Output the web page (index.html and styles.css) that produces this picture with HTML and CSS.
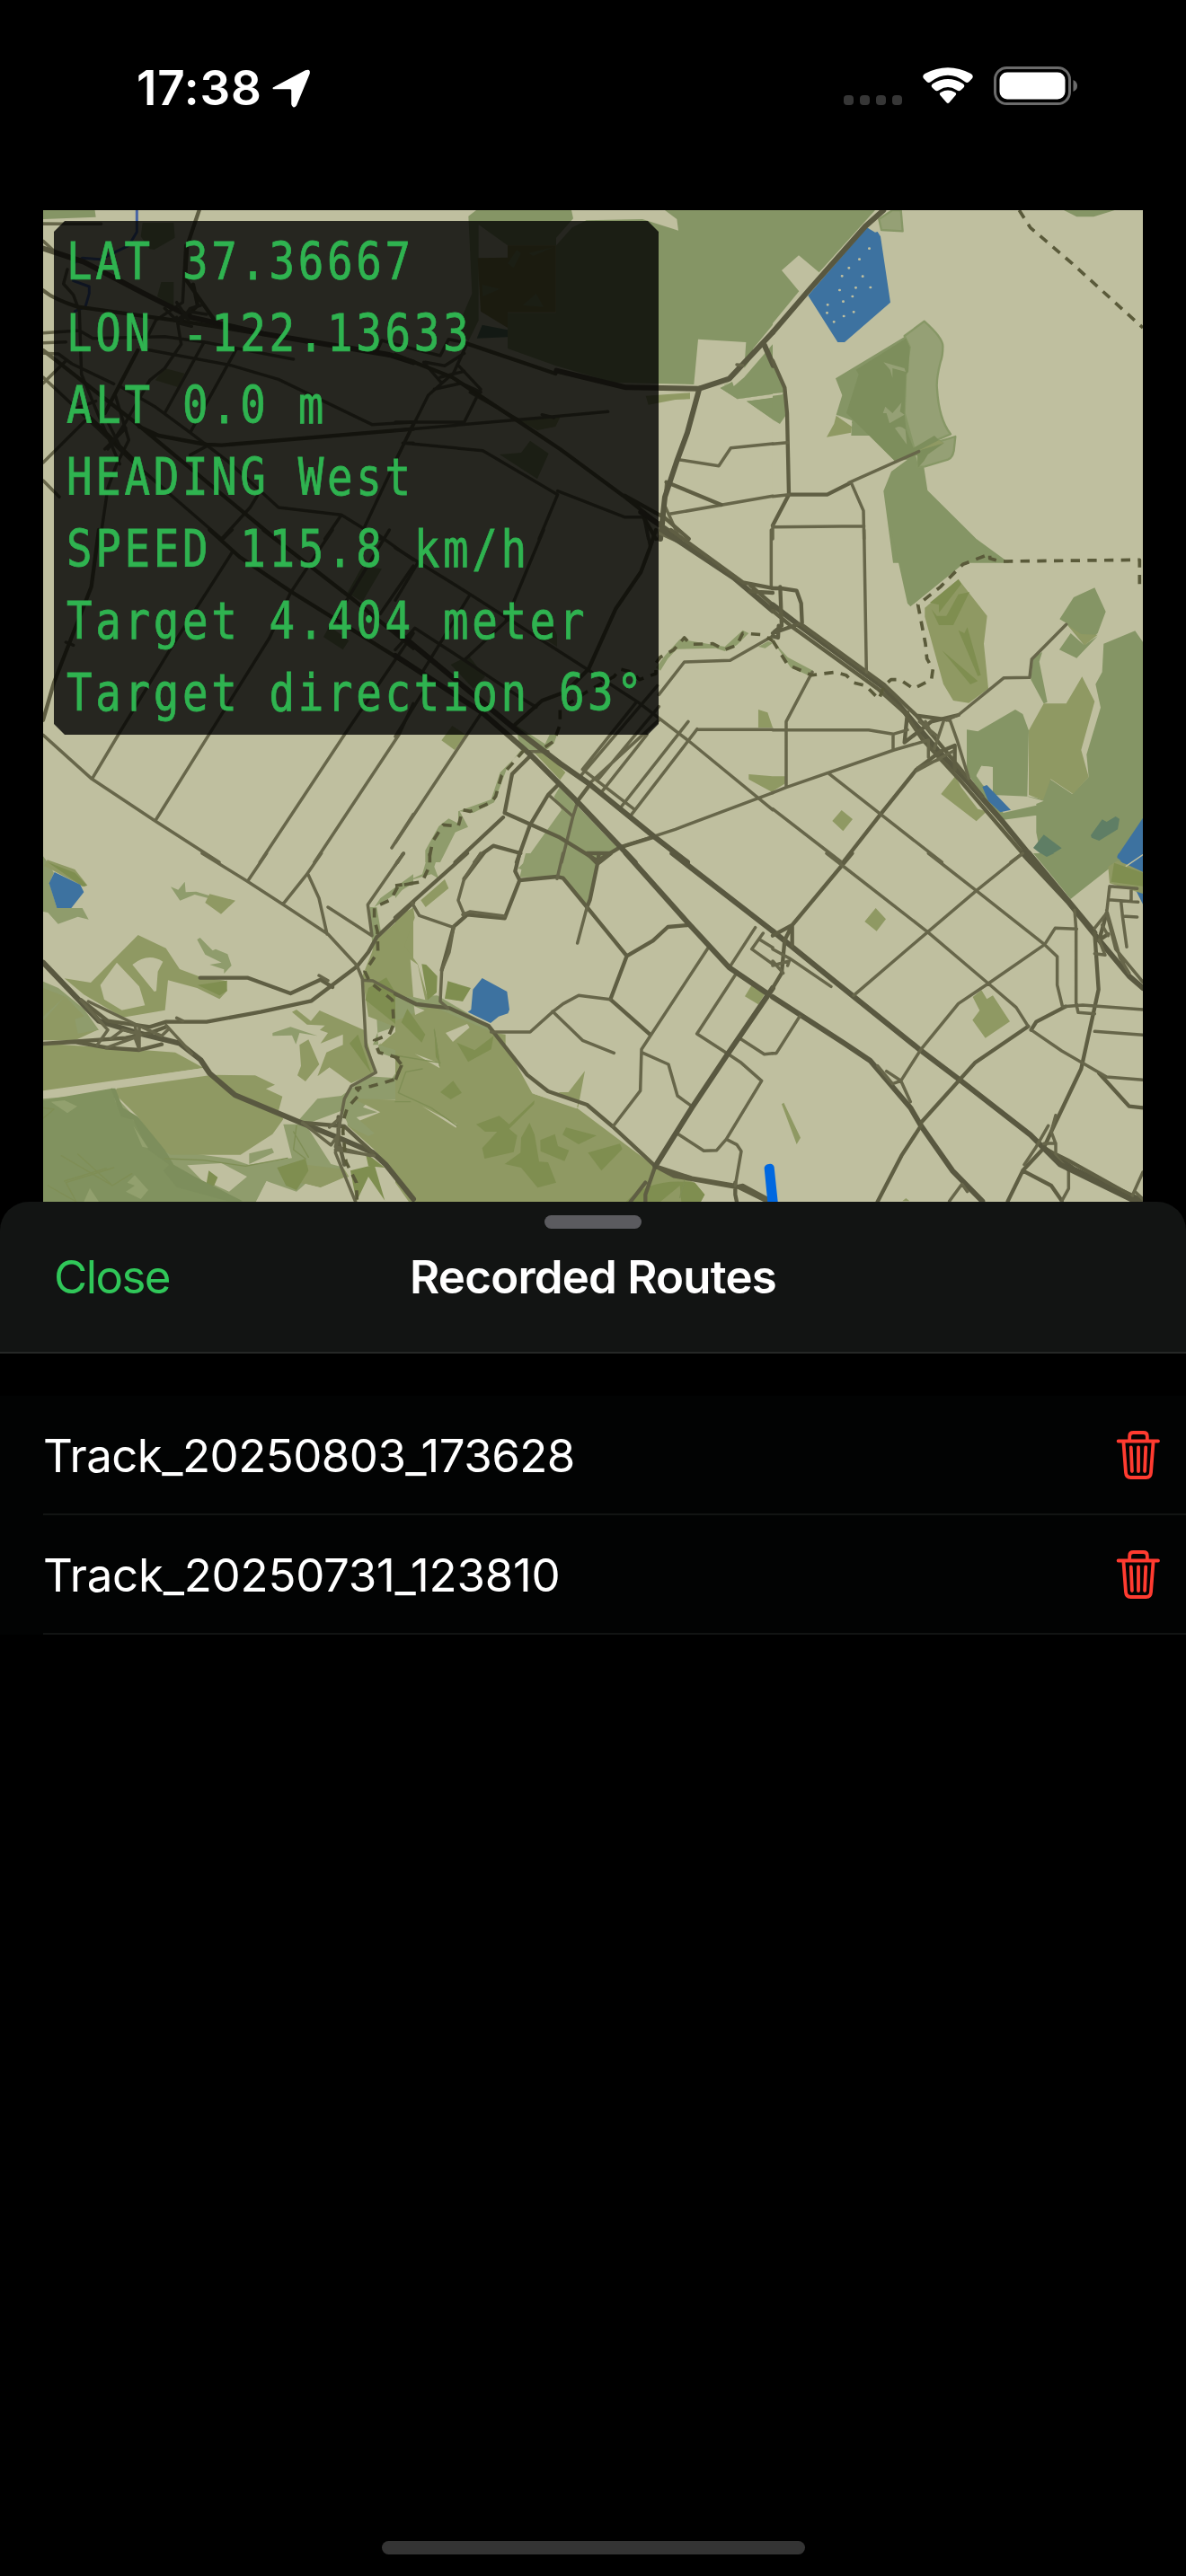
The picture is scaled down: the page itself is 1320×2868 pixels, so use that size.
FILE: index.html
```html
<!DOCTYPE html>
<html lang="en">
<head>
<meta charset="utf-8">
<title>Recorded Routes</title>
<link rel="stylesheet" href="styles.css">
</head>
<body>
<svg class="defs" aria-hidden="true">
  <symbol id="trash" viewBox="0 0 50 58">
    <path d="M2.6 13.5H47M15.2 13V8Q15.2 4 19.5 4H30.5Q34.8 4 34.8 8V13M8.4 14L11 48.5Q11.4 54 16.5 54H33.5Q38.6 54 39 48.5L41.6 14M16.8 20.5L17.9 47M25 20.5V47M33.2 20.5L32.1 47"/>
  </symbol>
</svg>
<div class="phone">
  <header class="status">
    <div class="clock"><span class="time">17:38</span>
      <svg class="arrow" viewBox="0 0 44 44"><path d="M3 20.500L38 2Q43 0 42 5L27 41Q24 45 22.500 40V24Q22.500 22 20 22H4Q-1 22.500 3 20.500Z"/></svg>
    </div>
    <div class="signals">
      <div class="dots"><i></i><i></i><i></i><i></i></div>
      <svg class="wifi" viewBox="0 0 60 43"><path d="M3.500 14Q-1 10 3.500 7Q30-7 56.500 7Q61 10 56.500 14L54 16.500Q52 18 50 16.500Q30 1 10 16.500Q8 18 6 16.500ZM13 24Q9 21 13 18.500Q30 8 47 18.500Q51 21 47 24L45 26Q43 28 40 26Q30 19 20 26Q17 28 15 26ZM22 33Q19 30 22 28.500Q30 24 38 28.500Q41 30 38 33L31.500 40.500Q30 42 28.500 40.500Z"/></svg>
      <svg class="battery" viewBox="0 0 94 44"><rect class="shell" x="1.500" y="1.500" width="83" height="40" rx="13"/><rect class="charge" x="6.500" y="6.500" width="73" height="30" rx="8.500"/><path class="nub" d="M88.500 15Q93 17 93 21.500T88.500 28Z"/></svg>
    </div>
  </header>

  <main class="map-view">
    <svg class="map" viewBox="48 234 1224 1104">
      <!-- land cover -->
      <g transform="translate(40 230) scale(.33333)">
        <path class="park" d="M0 0H195L200 35L24 42V12ZM24 52L100 54L60 60L24 58ZM356 54H460L464 104L395 144L380 142L350 100ZM418 252H460V335L405 300Z"/>
        <path class="grove" d="M430 540L496 557L474 603L398 580Z"/>
      </g>
      <g transform="translate(440 230) scale(.33333)">
        <path class="park" d="M244 32L270 12H588L594 40L537 104V130L590 70L638 46L825 42L945 80L940 42L900 12H1260V395L1195 474L1165 570L1130 600L1125 585L1085 606L1142 643L1260 626V710L1173 650L1260 640V1110H1260V600L996 594L730 588L536 532L375 474V355H536V130H375L278 60V380L244 450L205 410L256 290Z"/>
        <path class="land" d="M1011 443L1171 453L1165 540L1090 604H996ZM1260 410L1165 540L1090 606L1142 643L1260 626Z"/>
        <path class="park" d="M1085 606L1125 585L1130 600L1165 570L1260 460V626L1142 643ZM1173 650L1260 638V711ZM348 828L420 822L450 782L512 825L474 910Z"/>
        <path class="scrub" d="M275 172L375 170V130H536V353H375V405L285 350Z"/>
        <path class="park" d="M375 190L405 145L420 155L395 205ZM425 330L470 290L495 335ZM445 155L530 135L460 165ZM290 260L350 275L292 300Z"/>
        <path class="grove" d="M410 712L550 704L535 735L474 747ZM836 632L984 622V643L935 645L845 662Z"/>
        <path class="marsh" d="M290 395L375 412V436L272 440Z"/>
        <path class="land" d="M1173 712H1260V1110H1173Z"/>
      </g>
      <g transform="translate(860 230) scale(.33333)">
        <path class="park" d="M0 12H342L155 220L87 163L30 213L88 283L0 390ZM0 520L40 605L42 700L24 726L0 712ZM972 12L1015 34H1072L1142 12ZM210 574L445 432L458 470L455 550L445 560L442 690L470 800L485 860L505 870L517 948L680 1110L790 1190H402L370 950L396 885L450 845L408 850L325 765H262L265 724L212 695L232 630Z"/>
        <path class="meadow-edged" d="M355 42L400 12H428L434 82L363 78ZM440 432L506 383Q570 440 568 468Q568 500 560 520Q545 580 549 610Q555 710 594 760L485 806L610 768L605 815Q600 840 585 845L508 868L485 870V830L470 800L440 690L445 550L458 470Z"/>
        <path class="woods" d="M278 545L445 440L458 470L453 552L445 560L440 690L445 745L470 806L540 765L555 780L572 790L518 828L505 850L485 872L484 830L408 850L246 690L287 560Z"/>
        <path class="meadow" d="M370 520L440 540L444 552L400 540V572L392 545ZM368 690L376 668L400 690L430 655L425 685L440 695L390 724L380 690ZM408 740Q425 728 443 745L448 795Z"/>
        <path class="grove" d="M212 698L264 735L262 755L180 770L205 725ZM486 815L555 780L572 790Z"/>
        <path class="land" d="M0 625L35 621L32 628L0 632ZM215 696L265 715L263 730Z"/>
        <path class="water" d="M315 70L342 86L350 84L360 100L393 320L240 453H217L118 297Z"/>
        <path class="buoys" d="M322 140h1M289 176h1M254 205h1M231 232h1M300 233h1M223 279h1M277 271h1M326 270h1M266 300h1M235 317h1M183 328h1M181 355h1M237 366h1M270 352h1M204 385h1"/>
      </g>
      <g transform="translate(40 590) scale(.33333)">
        <path class="park" d="M1090 120L1155 130L1090 240L1040 210ZM980 320L1045 370L1025 400L960 358Z"/>
      </g>
      <g transform="translate(440 590) scale(.33333)">
        <path class="stream" d="M400 650L500 715L515 684H540L530 712L505 735L485 760L430 722L375 790L330 910L260 945L215 940L243 992L200 1010L150 1110H100V1070L145 990L178 964L210 980V940L320 900L350 810L420 740ZM870 460L900 420L950 365L1100 390L1160 335L1180 345L1140 385L1100 405L1070 395L940 398L910 430L885 470ZM1212 390L1245 372L1260 378L1235 395Z"/>
        <path class="park" d="M185 450L245 420L300 490L260 530Z"/>
        <path class="grove" d="M190 654L235 684L198 735L154 703ZM465 745L510 745L568 810L550 835ZM1212 600L1243 610L1260 660H1212ZM1180 816L1260 823V877L1180 833Z"/>
        <path class="stream" d="M548 860L740 1060L675 1110L650 1185L640 1250L555 1165H500L410 1130L430 1110L555 935L530 890ZM460 340L500 260L540 350V390Z"/>
      </g>
      <g transform="translate(860 590) scale(.33333)">
        <path class="park" d="M396 0H648L720 75L690 70L640 110L460 256L450 245ZM958 298L1005 225L1075 193L1112 273L1085 345L1040 385L978 310ZM957 400L995 345L1040 385L1085 355L1015 428ZM862 500L870 425L900 408L890 440L917 575L905 580ZM1105 380L1210 337L1240 380V1110H1150L995 1232L900 1110L880 1010V915L905 905L850 890L855 670L835 615L810 600L685 673L648 667V810L760 970L880 953V920L770 945L705 850L680 820L697 788L735 792V885L855 890L900 900L925 832L1000 882L1055 825L1048 750L1095 593L1078 515L1100 475Z"/>
        <path class="land" d="M680 822L697 788L734 792V890L700 850Z"/>
        <path class="stream" d="M0 370L50 425L135 470L125 488L60 460Z"/>
        <path class="grove" d="M508 260L620 165L716 287L705 380L720 530L655 578L603 570L570 515L508 290ZM905 580H980L1033 490L1075 573L1030 735L1055 825L1003 882L928 832L903 903L855 885V670ZM610 822L630 860L685 932L715 940L680 973L562 882ZM230 936L267 966L235 1006L199 972ZM0 823H42V847L0 873ZM985 318L1030 348L1085 350L1042 385Z"/>
        <path class="thicket" d="M525 243L620 165L630 180L555 277V250ZM530 265L548 287H580L620 215L657 208L603 318H555ZM565 402L685 505L660 516ZM620 335L640 345L650 325L695 485L685 488Z"/>
        <path class="water" d="M700 858L715 852L795 935L760 943L720 905ZM1150 1090L1236 962V1110L1260 1250H1236L1165 1110Z"/>
        <path class="marsh" d="M870 1062L905 1018L965 1063L912 1095ZM1062 1020L1100 967L1115 975L1145 957L1158 965L1152 1000L1090 1038L1065 1028Z"/>
      </g>
      <g transform="translate(40 950) scale(.33333)">
        <path class="stream" d="M0 0L24 10L35 25L60 65L45 100L70 183H155L176 221L140 212L74 236L40 198L24 195ZM450 112L475 122L497 95L500 130L535 128L580 142L575 150L530 138L481 158ZM538 288L548 282L590 325L600 320L640 337L653 375L628 402V388L580 372L620 365L565 338ZM24 428L75 450L160 520L210 590L140 600L24 625ZM790 600L850 580L940 610L880 600L868 638L855 608L790 610ZM1115 180H1138L1155 280L1118 350L1115 420L1200 580L1140 600L1125 640H1260V820L1115 825L1040 900L1020 860L900 905L870 900L940 820L1020 810L1110 745L1190 750L1215 715L1200 685L1145 665ZM826 905L900 905L985 1038L1030 1050L900 1104L870 1150L770 1095L735 1164H24V820L255 800L430 990L650 1020L710 1040L855 1018ZM1130 180L1260 100V70L1150 150Z"/>
        <path class="grove" d="M38 22L130 54L172 107L160 112L28 42ZM580 136L666 158L618 203L565 165ZM95 418L183 432L341 273L434 317L480 387L550 413L630 425L638 460L613 487L538 450L441 424L431 524L290 548L160 472ZM24 635L325 655L465 665L560 717L24 793ZM270 785L590 740L732 742L798 773L768 787L823 812L810 860L826 888L790 938L683 1007H450L420 990L340 880L260 800ZM1140 285L1260 180V600L1200 580L1110 545L1090 410ZM855 530L870 522L918 560L947 525L1095 590L1135 730L1053 768L980 715L940 745L970 665L1025 640V605L950 635L975 600L948 590L965 575L905 572ZM910 622L946 705L900 762L873 742L885 710L880 640ZM1060 820L1260 825V1164L1165 1040L1130 990L1040 910L1150 865ZM1145 640L1260 550V740L1220 730L1240 670ZM900 1040L1030 1055L1045 1080L950 1117L880 1100ZM24 450L100 480L205 590L130 625H24Z"/>
        <path class="stream" d="M24 545L95 480L24 560ZM130 555L170 540L208 590L140 602ZM1040 830L1140 865L1070 882L1130 935L1110 945L1040 910ZM712 1003L788 985L795 1000L712 1038Z"/>
        <path class="land" d="M215 440L270 365L345 445L364 508L287 524L228 488ZM322 372Q375 330 424 362L407 395L402 460L395 462ZM505 1042L620 1035L705 1080L645 1130L580 1100L568 1107ZM24 797L565 716L580 738L285 775L24 813ZM735 1164L770 1095L870 1130L900 1104L950 1117L1035 1080L1062 1164ZM1150 640L1205 590L1155 625Z"/>
        <path class="forest" d="M24 825L255 785L265 830L430 1000L480 1080L690 1164H24Z"/>
        <path class="thicket" d="M40 30L130 65L170 107L155 110ZM540 440L638 425V460L613 475ZM1075 605L1120 735L1047 635ZM805 1050L870 1030L900 1020L910 1060L870 1125L835 1110ZM1170 415L1215 490L1200 570L1100 490L1110 450ZM1050 1060L1130 1040L1165 1160L1110 1080L1070 1164ZM1100 1000L1165 1050L1110 1045ZM577 1060L607 1082L595 1110L568 1110Z"/>
        <path class="woods" d="M250 785L265 785L290 850L340 880L430 990L460 1040L530 1080L590 1110L690 1162H640L470 1115L425 1060L445 1040L375 990L325 890L285 880Z"/>
        <path class="glade" d="M50 830L95 825L138 845L105 868ZM330 1075L375 1125L350 1155L300 1130L330 1110L305 1100ZM180 1118L210 1164H160ZM325 910L375 985L355 980Z"/>
        <path class="contour" d="M24 850L60 855L24 885M85 1010L255 1110L320 1070M140 1005L250 1105M40 1110L135 1164L100 1100L260 1050M430 1020L560 1025L700 1045L840 1018M860 930L910 1015M95 1095L235 1052M870 910L860 990L900 1020"/>
        <path class="water" d="M62 63L148 105L160 130L118 183H70L44 100Z"/>
      </g>
      <g transform="translate(440 950) scale(.33333)">
        <path class="stream" d="M110 0H145L130 45L145 85L120 70L50 90L0 150V110L90 70ZM435 0H680L655 140L640 165L560 80H415ZM0 480L140 475L320 580L350 620L150 590L60 600L0 560Z"/>
        <path class="grove" d="M165 87L178 117L101 180L85 157ZM0 210L60 183L65 215L30 310L75 370L110 490L0 470ZM1190 440L1240 460L1212 505L1167 478ZM0 560L120 510L330 600L368 605V640L457 802L605 850L865 1045L1000 1100L1033 1140L1020 1164H45L0 1100ZM545 798H578L633 727L610 850Z"/>
        <path class="land" d="M50 355L75 372L100 490L60 480ZM168 600L240 570L248 582L192 630ZM62 510L98 525L66 540ZM457 802L545 808L610 835L605 853ZM65 670L145 700L148 718ZM90 845L205 905L203 917Z"/>
        <path class="thicket" d="M175 427L252 450L225 495L165 485ZM88 370L103 372L140 410L138 465L108 490ZM40 520L100 605L88 632L20 565ZM205 632L265 658L328 610L320 655L243 697ZM193 760L222 800L185 822L150 798ZM270 905L347 877L380 905L465 825L463 838L380 920L407 943L395 998L298 1020L290 985L340 930L300 930ZM448 900L465 940L480 1030L510 1032L537 1100L475 1117L420 1050L365 1038L418 1000L420 950ZM484 958L533 938L543 978L580 992L565 1028L485 995ZM570 916L672 943L612 972L558 940ZM643 1000L750 970L758 988L688 1060ZM770 1164Q850 1080 1000 1100L1033 1140L1020 1164ZM130 580L150 705L135 680Z"/>
        <path class="grove" d="M885 1164L950 1110L955 1164Z"/>
        <path class="contour" d="M0 675L150 700M90 720L35 730L10 800L120 850L205 910M950 1150L965 1095M130 590L148 710M0 830L50 830"/>
        <path class="water" d="M290 417L373 462L381 522L376 535L345 545L318 567L242 530L253 522L259 455Z"/>
      </g>
      <g transform="translate(860 950) scale(.33333)">
        <path class="park" d="M870 0H1155L995 152Z"/>
        <path class="water" d="M1155 0H1236V60L1185 38L1150 15Z"/>
        <path class="grove" d="M1120 45L1150 25L1185 38L1236 62V135L1125 100ZM344 183L378 220L347 260L307 228ZM697 457L715 487L735 475L792 562L710 617L667 557L691 525L668 480ZM30 838L37 833L93 950L80 972ZM433 1162L445 1152L457 1162Z"/>
        <path class="thicket" d="M1140 32L1236 65V110L1130 95Z"/>
        <path class="shore" d="M1180 43L1236 5"/>
        <path class="marsh" d="M895 0H940L915 12Z"/>
      </g>

      <!-- roads -->
      <g transform="translate(40 230) scale(.33333)">
        <path class="creek" d="M337 12V85L310 130L215 176L155 172L125 190V248L178 267V290L165 335L130 350"/>
        <path class="road" d="M24 58H218M24 115L60 148M24 140L150 180M105 210L92 258L125 295L145 350L152 560L210 700L280 860M24 422L145 414L190 440L430 434L560 452L860 510M24 455L100 452M24 490L75 492L120 525L260 592M24 590L100 515M24 855L165 715M24 915L78 970M500 130L490 320L400 380L370 440M24 570L200 735L320 850L620 1110M370 478L650 530L810 577L1122 728L1260 720M560 455L430 690M668 478L515 755L640 850L810 1005L1020 1030L1150 1110M515 830L580 795M740 965L715 1005L620 1110M1020 1030L965 1110M1260 725L1095 1075M1140 480L1155 447L1200 460M1225 790H1260M265 630L310 780L270 860L240 940L215 1110M145 670L200 650M280 600L400 670L515 755M470 370L485 460L430 540L380 580L340 650L300 720L240 810M345 735L400 765"/>
        <path class="arterial" d="M24 280Q60 310 140 335L500 385L720 420M24 480L330 720L800 1110M145 670L330 850M345 735L410 765L570 795L620 797L1260 743M340 480L230 690M505 130L498 240L600 385M545 12L505 130M525 260L540 330L500 370"/>
        <path class="highway" d="M24 140L160 185L360 290L520 370L760 425L1180 495L1260 520"/>
        <path class="road" d="M430 340L470 380L510 350L570 360M520 400L480 390L515 340L550 330M470 320L510 380M240 720L290 820M230 810L300 740"/>
      </g>
      <g transform="translate(440 230) scale(.33333)">
        <path class="road" d="M0 460L150 498L178 443L240 456M240 456L195 555L110 630L0 850M95 520L155 590M100 520L165 532L230 490M210 530L285 610L230 720H0M130 610L220 590L285 620M0 748L490 705L710 685M490 695L530 705M28 790L292 815L542 962L480 1110M542 950L765 1037H830L845 1110M150 570L230 550M945 845L1080 866L1120 806L1260 792M915 1027L1260 967M905 925L895 1060L880 1110M900 1000L950 1110M250 620L410 712"/>
        <path class="arterial" d="M0 495L190 570L400 710L550 810L760 965L880 1060M240 458L535 558M905 920L1088 996M765 965L900 1040L980 1110M830 1040L870 1110"/>
        <path class="highway" d="M538 548L770 604L1015 608L1115 575L1260 420M1015 608L975 755L940 850L900 970L885 1110M1232 462L1262 530M820 1020L950 1110"/>
        <path class="road" d="M1140 528L1160 530"/>
      </g>
      <g transform="translate(860 230) scale(.33333)">
        <path class="highway" d="M0 420L120 280L310 65L370 12"/>
        <path class="arterial" d="M0 515L40 605L48 690L54 962L0 1065M54 962H182L255 925"/>
        <path class="road" d="M0 793L50 788M0 968L54 962M255 922L488 818M262 922L303 1016L305 1110M5 1070L305 1067M0 1065V1110"/>
        <path class="rail" d="M823 12L860 70L1000 190L1236 405"/>
      </g>
      <g transform="translate(40 590) scale(.33333)">
        <path class="road" d="M655 0L620 35M990 0L850 210L780 360L580 680L398 972M655 75L460 380L275 684L187 832M24 685L187 832L398 972L612 1110M1260 120L1150 280M1180 0L980 330M1260 345L1030 684L748 1110M1260 580L1212 684L930 1110M1260 950L1188 1062M1227 1082L1205 1110M1120 0L1260 100M100 375L125 385"/>
        <path class="arterial" d="M210 0L185 190L60 510L24 635M580 0L680 90L850 205L1260 460M760 0L1050 225L1260 395"/>
      </g>
      <g transform="translate(440 590) scale(.33333)">
        <path class="road" d="M0 60L250 215L640 465L810 575L980 705L1260 935M495 0L370 300M75 110L0 235M250 215L90 475M375 300L230 435M0 400L65 328L230 435L410 555L470 592M0 690L90 545M285 615L0 1045M25 1082L8 1110M880 550L965 441L1118 436L1260 355M805 575L625 800M620 820L875 520M680 830L880 590M645 850L880 635M685 880L840 684M978 640L750 930M1008 665L785 955M1008 667H1260M625 800L800 935M750 1060L935 1000L1260 878M512 885L593 957L605 920M593 957L555 1110M880 10L1000 65M1255 0V190M840 0L850 50M510 740H440"/>
        <path class="arterial" d="M870 0L850 60L820 140L735 265L645 465L570 540L490 570L400 650M450 755L390 815L365 945L545 1025L675 1105L750 1060L865 1025M545 850L510 885L450 985L405 1110M650 850L605 910M360 960L200 1110M265 1110L285 1085L327 1055L418 1080"/>
        <path class="highway" d="M0 335L400 665L550 780L650 850L865 1025L975 1110M0 420L290 610L445 745L610 910L800 1110M890 0L1130 160L1260 270"/>
        <path class="arterial" d="M920 0L1160 175L1260 195M1185 205L1260 210M1185 185L1260 250"/>
        <path class="path" d="M500 725L530 705L550 650V600L580 580L640 540L730 490L750 465L790 475L815 500L870 480L870 445L885 425L930 400L965 360L985 382L1060 380L1100 400L1140 385L1160 345L1225 350L1260 370M430 735L400 770L355 820L335 890L320 910L250 940L225 935L210 990L160 985L125 1040L110 1110"/>
      </g>
      <g transform="translate(860 590) scale(.33333)">
        <path class="highway" d="M0 250L90 320L370 525L550 735L650 840L760 965L878 1110"/>
        <path class="arterial" d="M0 270L60 320L350 530L440 610L500 700L620 830L860 1110M95 315L370 515L480 620L620 790L700 890M0 195H28L80 203L95 245L98 310M25 190L30 320L5 340M85 315L0 345M20 320L18 360L0 355M450 610L440 710L530 640L620 618M480 620L590 635M360 950L235 1110M360 950L480 800L560 740L608 720V800"/>
        <path class="road" d="M305 0L313 475M580 635L620 618L772 494L858 493L865 432L980 316M0 668H320L402 682L450 668M402 682V735M0 878L45 860L405 735L520 702V760M45 860V640L132 475M185 812L565 1110M0 932L230 1110M590 630L615 700L655 830M570 640L540 730M490 640L545 685M510 640L530 680M480 805L600 740M795 1110L835 1080M485 795L560 765"/>
        <path class="path" d="M0 370L50 450L130 485L210 475L245 485L270 510L310 520L355 565L372 520L395 500H425L470 530L530 500L535 465L515 430L510 380L485 250L560 190L635 115L725 80V95L760 105L1225 100V195"/>
      </g>
      <g transform="translate(40 950) scale(.33333)">
        <path class="highway" d="M24 365L210 560L340 600L480 635L550 690L580 735L665 808L885 900L1010 950L1125 1000L1168 1040L1260 1155"/>
        <path class="arterial" d="M150 490L240 560L380 580L435 563H570L750 530L920 493L1072 378L1110 330L1138 280L1260 165M548 416H708L850 468L950 422L990 447M24 636L300 617L380 600L435 580M24 636L130 630L240 650L345 657L420 638M890 900L1030 912L1125 1000M1010 880V960L1020 1000L1030 1040"/>
        <path class="road" d="M555 0L705 93L825 171L975 270L1072 375L1090 420L1102 645L1135 732L1053 778L1030 820L1015 900L1000 1000L1067 1164M770 0L707 93M953 0L907 67L825 170M907 67L945 150L972 270M975 180L1122 275L1108 172L1227 0M1090 424L1125 426L1260 500M150 490L240 590L205 640M250 620L290 590L350 605M435 575L490 635L520 670M235 650L330 615L345 655L330 570L420 610L440 590M890 900L985 975L1010 940L1000 980L1115 1010M945 408L975 425M470 550L490 560M175 495L330 570M345 580V650M980 915L1020 880M1000 990L1130 1010"/>
        <path class="path" d="M1260 100L1210 108L1185 155L1130 180V220L1140 260L1142 330L1098 395L1115 430L1190 490L1195 570L1180 605L1130 625L1145 665L1215 685L1220 710L1200 755L1120 778L1070 785L1085 800L1040 850L1030 880L1025 930L1035 1030L1070 1100L1072 1164"/>
      </g>
      <g transform="translate(440 950) scale(.33333)">
        <path class="arterial" d="M0 215L55 165L240 0M415 0L400 60L415 90L540 78L560 83L640 180L773 343L718 488L850 605M415 90L365 217L240 205L195 245L155 390M680 0L675 35L640 0H720L675 35L650 155L640 180M295 0L230 85M0 470L70 504L180 517L312 577L440 740L510 795L640 840L725 912L868 1045L990 1085L1135 1110L1240 1162M773 343L860 292L910 246L975 240M868 1045L930 1078L1135 1115L1160 1110L1260 1164M835 1164V1140L868 1045M785 1164L835 1100M1135 1100V1140L1140 1164"/>
        <path class="road" d="M0 40L28 0M55 165L80 208L195 248M285 0L230 85L210 157L230 205M560 0L540 85M640 180L608 300M225 205L250 195L365 210M195 245L180 330L155 390L150 495L175 517M320 597H450L525 530L560 503L612 475L718 488M525 528L625 625L730 667M1045 315L822 655L818 793L727 912M822 665L912 705L942 810L990 845M1115 382L1202 248M1138 402L1007 603L1110 670L1155 700L1223 760L1105 955L1073 992L1030 994L940 935M1105 955L1140 973L1155 995L1135 1110M1150 618L1232 671L1260 668M1228 267L1190 320L1260 370M1215 287L1260 315"/>
        <path class="highway" d="M770 0L975 230L1115 382L1245 470M925 0L1260 260M868 1045L990 850L1110 670L1240 480L1260 450"/>
        <path class="path" d="M115 0V40L90 95L0 108M0 680L20 705L0 760"/>
        <path class="track" d="M1245 1052L1256 1164"/>
      </g>
      <g transform="translate(860 950) scale(.33333)">
        <path class="highway" d="M835 0L985 160L1090 290L1190 410L1236 450M855 0L1075 265M0 260L210 430L490 655L625 757L860 940L905 985L1005 1055L1236 1162M0 480L240 635L325 692L460 850L495 910L600 1060L700 1162"/>
        <path class="arterial" d="M265 0L65 240L40 290L30 400L0 450M0 275L65 240V310M495 900L675 700L853 578M350 1164L430 1010L495 910M1075 265L1088 455L1030 720L930 930L905 985L835 1060L785 1162M863 590L880 563L978 512M1090 735L1190 845L1236 850M905 985L985 1025L1200 1145M835 1060L930 1110L965 1160M1115 200L1090 290L1120 270"/>
        <path class="road" d="M180 0L520 265L720 435L813 515L853 578M520 0L680 125L908 305L950 345V440L967 510M835 0L680 125L515 265L270 475M908 305L720 435L620 502L495 655L428 760L460 830M908 305L943 250L1015 253M1008 190L1013 253V500L1020 532L1075 536M970 512L1035 507L1236 522M1075 595L1236 607M863 590L965 660L1115 747L1236 757M380 728L428 760L400 770L350 710M0 320L55 350L195 445M0 375L55 360L50 375M0 360L35 400M90 545L12 668H0M1125 110L1115 200L1075 250M1125 110L1217 118M1122 155L1220 163M1163 160L1168 210L1217 213M1168 210L1182 313M1197 118V160M1115 200L1145 320L1236 430M1115 190L1160 350L1190 400M1075 335L1110 340L1090 290M1100 240L1120 275M590 1162L632 1105L650 1130M945 875L930 930L945 970V1010L988 1060V1120L965 1162M840 1040L880 980L920 910M905 970L945 968M1200 1145L1236 1065M1210 1130L1236 1155"/>
        <path class="highway" d="M905 985L960 1040L1210 1162"/>
        <path class="track" d="M-8 1050L4 1164"/>
      </g>
    </svg>
    <section class="hud">
      <p>LAT 37.36667</p>
      <p>LON -122.13633</p>
      <p>ALT 0.0 m</p>
      <p>HEADING West</p>
      <p>SPEED 115.8 km/h</p>
      <p>Target 4.404 meter</p>
      <p>Target direction 63°</p>
    </section>
  </main>

  <section class="sheet">
    <header class="sheet-head">
      <div class="grabber"></div>
      <div class="bar">
        <a class="close">Close</a>
        <h1>Recorded Routes</h1>
      </div>
    </header>
    <ul class="routes">
      <li><span class="first">Track_20250803_173628</span><svg><use href="#trash"/></svg></li>
      <li><span class="second">Track_20250731_123810</span><svg><use href="#trash"/></svg></li>
    </ul>
    <div class="home"></div>
  </section>
</div>
</body>
</html>
```
FILE: styles.css
```css
* { box-sizing: border-box; margin: 0; padding: 0; }
body { background: #000; color: #fff; font-family: Inter, "Liberation Sans", sans-serif; }
.defs { display: none; }
.phone { width: 1320px; height: 2868px; display: flex; flex-direction: column; background: #000; overflow: hidden; }

.status { height: 234px; padding: 74px 122px 0 152px; display: flex; justify-content: space-between; align-items: flex-start; }
.clock { display: flex; align-items: center; gap: 12px; height: 49px; }
.time { font-size: 53px; font-weight: 600; line-height: 49px; letter-spacing: 0.8px; width: 139px; white-space: nowrap; }
.arrow { width: 43px; height: 43px; fill: #fff; stroke: #fff; stroke-width: 1.5; }
.signals { display: flex; align-items: flex-start; }
.dots { display: flex; gap: 6.5px; padding-top: 32px; margin-right: 22px; }
.dots i { width: 11.5px; height: 11px; border-radius: 4px; background: #363636; }
.wifi { width: 58px; height: 42px; margin: 1px 22px 0 0; fill: #fff; }
.battery { width: 94px; height: 44px; margin-right: -2px; }
.shell { fill: none; stroke: #6b6b6b; stroke-width: 3; }
.charge { fill: #fff; }
.nub { fill: #6b6b6b; }

.map-view { height: 1104px; margin: 0 48px; position: relative; flex: none; }
.map { display: block; width: 1224px; height: 1104px; background: #bfbf9f; fill: none; stroke-linecap: round; stroke-linejoin: round; }
.land { fill: #bfbf9f; }
.park { fill: #859565; }
.meadow, .meadow-edged { fill: #95a075; }
.meadow-edged { stroke: #879766; stroke-width: 7; }
.woods { fill: #7d8e5c; }
.stream { fill: #8f9c6c; }
.grove { fill: #8f9963; }
.scrub { fill: #86854a; }
.thicket { fill: #7f8e50; }
.forest { fill: #81925f; }
.glade { fill: #92a06e; }
.marsh { fill: #5f7e65; }
.water { fill: #3d72a0; }
.contour { stroke: #7f8e55; stroke-width: 4; }
.shore { stroke: #bfbf9f; stroke-width: 4; }
.buoys { stroke: #bfbf9f; stroke-width: 8; }
.creek { stroke: #4664a5; stroke-width: 9; }
.road { stroke: #67664a; stroke-width: 10.5; }
.arterial { stroke: #5f5e43; stroke-width: 13; }
.highway { stroke: #595840; stroke-width: 18; }
.rail, .path { stroke: #5a5a3a; stroke-width: 11; stroke-dasharray: 31 25; stroke-linecap: butt; }
.track { stroke: #0068e0; stroke-width: 26; }

.hud {
  position: absolute; left: 12px; top: 12px; width: 673px; height: 572px; padding: 6px 0 6px 14px;
  background: rgba(0, 0, 0, .8); color: #2fb350;
  clip-path: polygon(12px 0, 661px 0, 100% 12px, 100% 560px, 661px 100%, 12px 100%, 0 560px, 0 12px);
}
.hud p {
  font: 57.500px/80px "DejaVu Sans Mono", monospace; letter-spacing: 4.400px; white-space: pre;
  -webkit-text-stroke: .8px #2fb350;
  transform: scaleX(.826); transform-origin: 0 0; width: 800px;
}

.sheet { flex: 1; background: #000; display: flex; flex-direction: column; }
.sheet-head { height: 169px; background: #121413; border-bottom: 2px solid #262827; border-radius: 32px 32px 0 0; padding-top: 15px; }
.grabber { width: 108px; height: 15px; border-radius: 8px; background: #5b5b5f; margin: 0 auto; }
.bar { display: grid; grid-template-columns: 1fr auto 1fr; padding: 23px 60px 0; height: 100px; line-height: 62px; }
.close { color: #30c759; font-size: 51px; letter-spacing: -1.600px; }
.bar h1 { font-size: 51px; font-weight: 600; letter-spacing: -.8px; line-height: 62px; }
.routes { list-style: none; margin-top: 47px; background: #020303; }
.routes li { height: 133px; margin-left: 48px; padding-right: 28px; border-bottom: 2px solid #121413; display: flex; align-items: center; justify-content: space-between; }
.routes span { font-size: 51px; line-height: 62px; white-space: nowrap; padding-top: 2px; }
.first { letter-spacing: -.55px; }
.second { letter-spacing: -.25px; }
.routes svg { width: 50px; height: 58px; fill: none; stroke: #ff3b30; stroke-width: 3.800; stroke-linecap: round; stroke-linejoin: round; }
.home { width: 471px; height: 15px; border-radius: 8px; background: #343434; margin: auto auto 24px; }
```
